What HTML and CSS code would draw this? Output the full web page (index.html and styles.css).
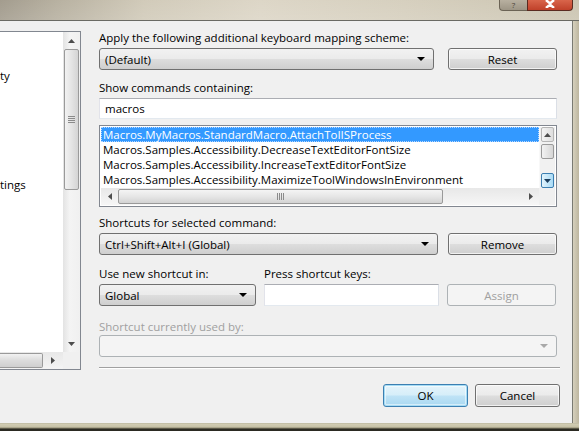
FILE: index.html
```html
<!DOCTYPE html>
<html>
<head>
<meta charset="utf-8">
<link rel="stylesheet" href="styles.css">
</head>
<body>
<div class="window">
  <div class="titlebar">
    <div class="caption-btns">
      <div class="cap-help">?</div>
      <div class="cap-close">
        <svg width="14" height="8" viewBox="0 0 14 8"><path d="M3 0 L7 3.5 L11 0 M3 8 L7 4.5 L11 8" stroke="#fff" stroke-width="2.4" fill="none"/></svg>
      </div>
    </div>
  </div>
  <div class="frame-mid">
    <div class="client">
      <div class="top-row">
        <div class="tree">
          <div class="tree-body">
            <div class="tree-text">
              <div class="tree-item t1">ty</div>
              <div class="tree-item t2">tings</div>
            </div>
            <div class="vscroll">
              <div class="sb-btn"><svg width="7" height="4" viewBox="0 0 7 4"><path d="M0 4 L3.5 0 L7 4Z" fill="#4d4d4d"/></svg></div>
              <div class="sb-thumb v-thumb"><span class="grip-h"></span></div>
              <div class="sb-track"></div>
              <div class="sb-btn"><svg width="7" height="4" viewBox="0 0 7 4"><path d="M0 0 L3.5 4 L7 0Z" fill="#4d4d4d"/></svg></div>
            </div>
          </div>
          <div class="tree-hscroll">
            <div class="sb-thumb h-thumb-left"></div>
            <div class="sb-btn hbtn"><svg width="4" height="7" viewBox="0 0 4 7"><path d="M0 0 L4 3.5 L0 7Z" fill="#4d4d4d"/></svg></div>
            <div class="corner"></div>
          </div>
        </div>
        <div class="main">
          <div class="label l1">Apply the following additional keyboard mapping scheme:</div>
          <div class="row r1">
            <div class="combo w-scheme"><span>(Default)</span><span class="arrow"></span></div>
            <div class="button">Reset</div>
          </div>
          <div class="label l2">Show commands containing:</div>
          <div class="textbox search">macros</div>
          <div class="listbox">
            <div class="lb-top">
              <div class="lb-items">
                <div class="lb-item selected">Macros.MyMacros.StandardMacro.AttachToIISProcess</div>
                <div class="lb-item">Macros.Samples.Accessibility.DecreaseTextEditorFontSize</div>
                <div class="lb-item">Macros.Samples.Accessibility.IncreaseTextEditorFontSize</div>
                <div class="lb-item">Macros.Samples.Accessibility.MaximizeToolWindowsInEnvironment</div>
              </div>
              <div class="lb-vscroll">
                <div class="sb-btn2"><svg width="7" height="4" viewBox="0 0 7 4"><path d="M0 4 L3.5 0 L7 4Z" fill="#4d4d4d"/></svg></div>
                <div class="lb-vthumb"></div>
                <div class="lb-vtrack"></div>
                <div class="sb-btn2 hover"><svg width="7" height="4" viewBox="0 0 7 4"><path d="M0 0 L3.5 4 L7 0Z" fill="#1d3e5c"/></svg></div>
              </div>
            </div>
            <div class="lb-hscroll">
              <div class="hs-btn"><svg width="4" height="7" viewBox="0 0 4 7"><path d="M4 0 L0 3.5 L4 7Z" fill="#4d4d4d"/></svg></div>
              <div class="hs-thumb"><span class="grip-v"></span></div>
              <div class="hs-track"></div>
              <div class="hs-btn"><svg width="4" height="7" viewBox="0 0 4 7"><path d="M0 0 L4 3.5 L0 7Z" fill="#4d4d4d"/></svg></div>
              <div class="lb-corner"></div>
            </div>
          </div>
          <div class="label l3">Shortcuts for selected command:</div>
          <div class="row r3">
            <div class="combo w-shortcuts"><span>Ctrl+Shift+Alt+I (Global)</span><span class="arrow"></span></div>
            <div class="button">Remove</div>
          </div>
          <div class="row l4">
            <div class="label col-a">Use new shortcut in:</div>
            <div class="label">Press shortcut keys:</div>
          </div>
          <div class="row r4">
            <div class="combo w-global"><span>Global</span><span class="arrow"></span></div>
            <div class="textbox keys"></div>
            <div class="button disabled">Assign</div>
          </div>
          <div class="label disabled-text l5">Shortcut currently used by:</div>
          <div class="combo disabled-combo"><span></span><span class="arrow grey"></span></div>
          <div class="separator"></div>
        </div>
      </div>
      <div class="bottom-row">
        <div class="button default">OK</div>
        <div class="button">Cancel</div>
      </div>
    </div>
    <div class="frame-right"></div>
  </div>
  <div class="frame-bottom"></div>
</div>
</body>
</html>
```

FILE: styles.css
```css
* { box-sizing: border-box; }
html, body { margin: 0; padding: 0; }
body {
  width: 579px;
  height: 431px;
  overflow: hidden;
  font-family: "Open Sans", "Noto Sans", "Liberation Sans", sans-serif;
  font-size: 11.5px;
  color: #000;
  background: #2b2a22;
}
.window { width: 579px; height: 431px; display: flex; flex-direction: column; }

.titlebar {
  height: 21px;
  position: relative;
  background:
    linear-gradient(to bottom, rgba(255,255,255,0.05), rgba(255,255,255,0.15)),
    linear-gradient(to right, #9e9788 0%, #b4ad9c 10%, #cfc8b6 25%, #dbd4c4 45%, #d4cdbb 70%, #c9c2ae 100%);
  border-bottom: 1px solid #6a6a64;
}
.caption-btns {
  position: absolute;
  right: 6px;
  top: 0;
  display: flex;
  height: 11px;
}
.cap-help {
  width: 28px;
  height: 11px;
  border: 1px solid #6b6355;
  border-top: none;
  border-right: none;
  border-radius: 0 0 0 4px;
  background: linear-gradient(#b8b0a0, #9d9585);
  color: #4a4438;
  font-size: 8px;
  line-height: 10px;
  text-align: center;
}
.cap-close {
  width: 46px;
  height: 11px;
  border: 1px solid #5a2a20;
  border-top: none;
  border-radius: 0 0 4px 0;
  background: linear-gradient(#d9654b, #c0412a);
  display: flex;
  justify-content: center;
  align-items: flex-start;
}

.frame-mid { display: flex; height: 402px; }
.client {
  width: 573px;
  background: #f0f0f0;
  border-right: 1px solid #7a7a72;
  display: flex;
  flex-direction: column;
}
.frame-right {
  flex: 1;
  background: linear-gradient(to right, #d6d0bd, #bdb69f);
}
.frame-bottom {
  height: 8px;
  background: linear-gradient(to bottom, #b6b29a 0px, #d1ccb3 1px, #c6c1a6 4px, #8f8a72 5px, #2b2a22 6px);
}

.top-row { display: flex; align-items: flex-start; padding-top: 9px; }

/* left tree */
.tree {
  width: 81px;
  height: 339px;
  border: 1px solid #828790;
  border-left: none;
  background: #fff;
  display: flex;
  flex-direction: column;
  margin-top: 1px;
}
.tree-body { flex: 1; display: flex; }
.tree-text { flex: 1; position: relative; }
.tree-item { height: 16px; line-height: 16px; }
.t1 { margin-top: 36px; }
.t2 { margin-top: 93px; }
.vscroll {
  width: 17px;
  display: flex;
  flex-direction: column;
  background: linear-gradient(to right, #e3e3e3, #f4f4f4 40%, #f0f0f0);
}
.sb-btn {
  height: 17px;
  display: flex;
  align-items: center;
  justify-content: center;
}
.sb-track { flex: 1; }
.v-thumb { height: 141px; }
.sb-thumb {
  border: 1px solid #9a9a9a;
  border-radius: 2px;
  background: linear-gradient(to right, #f2f2f2, #e4e4e4 50%, #d4d4d4);
  display: flex;
  align-items: center;
  justify-content: center;
  margin: 0 1px;
}
.grip-h {
  width: 7px;
  height: 7px;
  background: repeating-linear-gradient(to bottom, #8a8a8a 0 1px, transparent 1px 2px);
}
.tree-hscroll {
  height: 17px;
  display: flex;
  background: linear-gradient(to bottom, #e8e8e8, #f4f4f4);
}
.h-thumb-left {
  width: 43px;
  margin: 1px 0;
  border-left: none;
  border-radius: 0 2px 2px 0;
  background: linear-gradient(to bottom, #f2f2f2, #dcdcdc 50%, #cfcfcf);
}
.hbtn { width: 20px; }
.corner { width: 17px; background: #f0f0f0; }

/* main column */
.main {
  margin-left: 18px;
  width: 458px;
  display: flex;
  flex-direction: column;
}
.label { height: 15px; line-height: 15px; white-space: nowrap; }
.l1 { margin-top: 0; }
.row { display: flex; align-items: center; }
.r1 { margin-top: 3px; gap: 14px; }
.l2 { margin-top: 10px; }
.search { margin-top: 3px; height: 21px; }
.l3 { margin-top: 8px; }
.r3 { margin-top: 3px; gap: 10px; }
.l4 { margin-top: 11px; }
.col-a { width: 165px; }
.r4 { margin-top: 3px; gap: 8px; }
.l5 { margin-top: 13px; }
.disabled-combo { margin-top: 1px; width: 458px; }
.separator {
  margin-top: 10px;
  margin-right: -3px;
  height: 2px;
  border-top: 1px solid #a0a0a0;
  border-bottom: 1px solid #ffffff;
}

.combo {
  height: 22px;
  border: 1px solid #707070;
  border-radius: 3px;
  background: linear-gradient(to bottom, #f2f2f2 0%, #ebebeb 48%, #dddddd 52%, #cfcfcf 100%);
  display: flex;
  align-items: center;
  justify-content: space-between;
  padding: 0 8px 0 5px;
  white-space: nowrap;
}
.arrow {
  width: 0; height: 0;
  border-left: 4px solid transparent;
  border-right: 4px solid transparent;
  border-top: 4px solid #000;
}
.arrow.grey { border-top-color: #a8a8a8; }
.w-scheme { width: 335px; }
.w-shortcuts { width: 339px; }
.w-global { width: 157px; }
.disabled-combo {
  background: #f4f4f4;
  border-color: #adb2b5;
}

.button {
  width: 109px;
  height: 22px;
  border: 1px solid #707070;
  border-radius: 3px;
  background: linear-gradient(to bottom, #f2f2f2 0%, #ebebeb 48%, #dddddd 52%, #cfcfcf 100%);
  display: flex;
  align-items: center;
  justify-content: center;
  box-shadow: inset 0 0 0 1px rgba(255,255,255,0.7);
}
.button.disabled {
  background: #f4f4f4;
  border-color: #adb2b5;
  color: #a0a0a0;
  box-shadow: none;
}
.disabled-text { color: #a0a0a0; }

.textbox {
  background: #fff;
  border: 1px solid #abadb3;
  border-top-color: #abadb3;
  border-left-color: #e2e3ea;
  border-right-color: #dbdfe6;
  border-bottom-color: #e3e9ef;
  padding: 0 5px;
  line-height: 19px;
  white-space: nowrap;
}
.keys { width: 175px; height: 22px; }

/* listbox */
.listbox {
  margin-top: 6px;
  height: 82px;
  border: 1px solid #828790;
  background: #fff;
  display: flex;
  flex-direction: column;
  padding: 1px;
}
.lb-top { display: flex; height: 61px; }
.lb-items { flex: 1; overflow: hidden; }
.lb-item {
  height: 15px;
  line-height: 15px;
  padding-left: 2px;
  white-space: nowrap;
}
.lb-item.selected {
  background: #3399ff;
  color: #fff;
  outline: 1px dotted #b8d8ff;
  outline-offset: -1px;
}
.lb-vscroll {
  width: 16px;
  display: flex;
  flex-direction: column;
  background: #f1f1f1;
  border-left: 1px solid #f8f8f8;
}
.sb-btn2 {
  height: 15px;
  margin: 0 1px;
  border: 1px solid #b5b5b5;
  border-radius: 2px;
  background: linear-gradient(to right, #f4f4f4, #dedede);
  display: flex;
  align-items: center;
  justify-content: center;
}
.sb-btn2.hover {
  border-color: #3c7fb1;
  background: linear-gradient(to right, #e3f4fc, #a9dbf6);
}
.lb-vthumb {
  height: 15px;
  margin: 2px 1px 0;
  border: 1px solid #9a9a9a;
  border-radius: 2px;
  background: linear-gradient(to right, #f2f2f2, #d6d6d6);
}
.lb-vtrack { flex: 1; }
.lb-hscroll {
  height: 17px;
  display: flex;
  align-items: stretch;
  background: linear-gradient(to bottom, #e8e8e8, #f6f6f6);
}
.hs-btn { width: 17px; display: flex; align-items: center; justify-content: center; }
.hs-thumb {
  width: 325px;
  margin: 1px 0;
  border: 1px solid #9a9a9a;
  border-radius: 2px;
  background: linear-gradient(to bottom, #f4f4f4, #e6e6e6 50%, #d3d3d3);
  display: flex;
  align-items: center;
  justify-content: center;
}
.grip-v {
  width: 7px;
  height: 7px;
  background: repeating-linear-gradient(to right, #8a8a8a 0 1px, transparent 1px 2px);
}
.hs-track { flex: 1; }
.lb-corner { width: 16px; background: #f0f0f0; }

/* bottom buttons */
.bottom-row {
  display: flex;
  justify-content: flex-end;
  gap: 7px;
  padding-right: 12px;
  margin-top: 14px;
}
.bottom-row .button { width: 85px; height: 23px; }
.button.default {
  border-color: #3c7fb1;
  background: linear-gradient(to bottom, #e5f4fb 0%, #d6eef9 48%, #bfe3f6 52%, #a9d8f1 100%);
  box-shadow: inset 0 0 0 1px #a5dcf5, inset 0 0 0 2px rgba(255,255,255,0.5);
}
```
